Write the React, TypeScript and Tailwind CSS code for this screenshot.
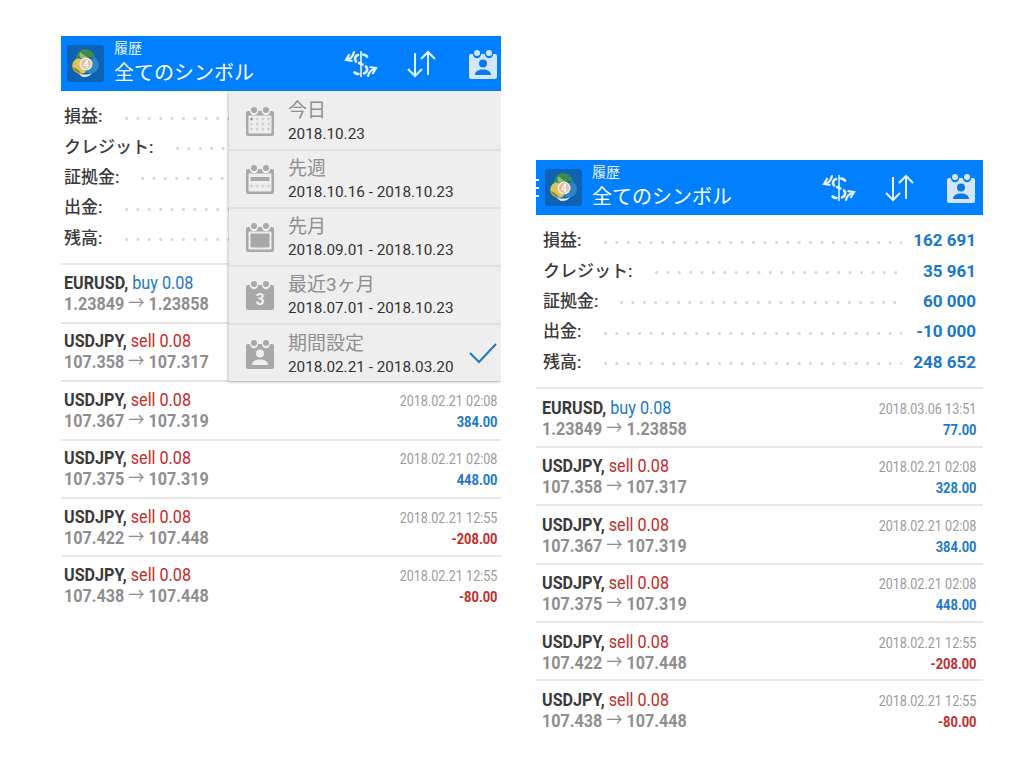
import React from "react";

const FONT = "font-['Roboto','Noto_Sans_CJK_JP',sans-serif]";

function Logo() {
  return (
    <div className="w-[37px] h-[37px] rounded-[3px] bg-[#0d62b3] flex items-center justify-center shrink-0">
      <svg width="33" height="33" viewBox="0 0 33 33">
        <path d="M16 2c5 0 10 4 10 9-3-1-6-1-9 0-3-1-7 0-10 2 0-6 4-11 9-11Z" fill="#3d8a4e" />
        <path d="M11 5c2 2 6 4 9 7-3-1-6-1-8 0-1-2-2-4-1-7Z" fill="#8cc07a" />
        <path d="M7 12c3-1 6 0 7 2 0 4 1 8 3 11-2 2-6 2-9 1-5-2-7-10-1-14Z" fill="#d9c75a" />
        <path d="M4 20c3 1 6 3 8 6-3 0-7-1-8-6Z" fill="#8e8b35" />
        <path d="M26 11c5 3 5 11 0 14-3 2-6 2-9 0 3-3 4-7 3-11 2-2 4-3 6-3Z" fill="#2f86c4" />
        <path d="M9 26c4 2 10 2 14 0-2 3-5 4-8 4-2 0-4-2-6-4Z" fill="#e6eaec" />
        <circle cx="17" cy="17" r="6.500" fill="#f3efe8" />
        <circle cx="17" cy="17" r="5" fill="#f0bb90" />
        <text x="17" y="20.500" textAnchor="middle" fontSize="10" fontWeight="700" fill="#fff" fontFamily="Roboto">4</text>
      </svg>
    </div>
  );
}

function DollarIcon() {
  return (
    <svg width="34" height="30" viewBox="0 0 34 30" fill="none" stroke="#e6f0fb" strokeWidth="2.600" strokeLinecap="round">
      <path d="M17 2v26" strokeWidth="1.600" strokeLinecap="butt" />
      <path d="M23 7.500C21.500 6 20 5.500 19 5.500" />
      <path d="M14 6c-3 1-4 4-2 6.500" />
      <path d="M15 14l3.500 1.500" />
      <path d="M22 17.500c2 2 1.500 6-2 7" />
      <path d="M14.500 25c-1.500 0-3-.5-4-1.500" />
      <path d="M10 3C9 7 7 9.500 4 10.500" strokeWidth="2.200" />
      <path d="M8.500 12 2 11l3.500-6" strokeWidth="2.200" strokeLinecap="butt" />
      <path d="M24 27c1-4 3-6 6-7" strokeWidth="2.200" />
      <path d="M25.500 18 32 19l-3.500 6" strokeWidth="2.200" strokeLinecap="butt" />
    </svg>
  );
}

function ArrowsIcon() {
  return (
    <svg width="31" height="28" viewBox="0 0 31 28" fill="none" stroke="#e6f0fb" strokeWidth="2">
      <path d="M9 3v23M2 19l7 7 7-7" />
      <path d="M22 25V2M15 9l7-7 7 7" />
    </svg>
  );
}

function CalBase({ fill, children, light }: { fill?: boolean; children?: React.ReactNode; light?: boolean }) {
  const c = light ? "#d5e6fa" : "#a8a8a8";
  const bg = light ? "#0080ff" : "#eeeeee";
  return (
    <svg width="28" height="30" viewBox="0 0 28 30">
      <rect x="0" y="5" width="28" height="25" rx="2" fill={c} />
      <circle cx="8" cy="5" r="4.200" fill={bg} />
      <circle cx="20" cy="5" r="4.200" fill={bg} />
      <circle cx="8" cy="4" r="3" fill={c} />
      <circle cx="20" cy="4" r="3" fill={c} />
      {!fill && <rect x="2.500" y="9.500" width="23" height="18" rx="1" fill="#eeeeee" />}
      {children}
    </svg>
  );
}

function PersonCal({ light }: { light?: boolean }) {
  const c = light ? "#0a78e8" : "#eeeeee";
  return (
    <CalBase fill light={light}>
      <circle cx="14" cy="14.500" r="4" fill={c} />
      <path d="M6 26c0-3.500 3-4.500 5.500-5.500h5c2.500 1 5.500 2 5.500 5.500Z" fill={c} />
    </CalBase>
  );
}

function Dots({ rows, y, on }: { rows: number; y: number; on: number }) {
  return (
    <>
      {Array.from({ length: rows * 4 }).map((_, i) => (
        <circle key={i} cx={5.500 + (i % 4) * 5.700} cy={y + Math.floor(i / 4) * 5} r="1.600" fill={i === on ? "#a0a0a0" : "#d2d2d2"} />
      ))}
    </>
  );
}

const menuIcons = [
  <CalBase key="a"><Dots rows={3} y={13} on={0} /></CalBase>,
  <CalBase key="b">
    <rect x="4.500" y="13" width="19" height="4" fill="#a8a8a8" />
    <Dots rows={1} y={22} on={-1} />
  </CalBase>,
  <CalBase key="c"><rect x="4.500" y="11.500" width="19" height="14" rx="1" fill="#a8a8a8" /></CalBase>,
  <CalBase key="d" fill>
    <text x="14" y="25" textAnchor="middle" fontSize="16" fontWeight="700" fill="#eeeeee" fontFamily="Roboto">3</text>
  </CalBase>,
  <PersonCal key="e" />,
];

const menu = [
  ["今日", "2018.10.23"],
  ["先週", "2018.10.16 - 2018.10.23"],
  ["先月", "2018.09.01 - 2018.10.23"],
  ["最近3ヶ月", "2018.07.01 - 2018.10.23"],
  ["期間設定", "2018.02.21 - 2018.03.20"],
];

const stats: [string, string, string][] = [
  ["損益:", "162 691", "w-[61px]"],
  ["クレジット:", "35 961", "w-[112px]"],
  ["証拠金:", "60 000", "w-[77px]"],
  ["出金:", "-10 000", "w-[61px]"],
  ["残高:", "248 652", "w-[61px]"],
];

type Tx = { s: string; side: "buy" | "sell"; a: string; b: string; d: string; v: string };
const txs: Tx[] = [
  { s: "EURUSD", side: "buy", a: "1.23849", b: "1.23858", d: "2018.03.06 13:51", v: "77.00" },
  { s: "USDJPY", side: "sell", a: "107.358", b: "107.317", d: "2018.02.21 02:08", v: "328.00" },
  { s: "USDJPY", side: "sell", a: "107.367", b: "107.319", d: "2018.02.21 02:08", v: "384.00" },
  { s: "USDJPY", side: "sell", a: "107.375", b: "107.319", d: "2018.02.21 02:08", v: "448.00" },
  { s: "USDJPY", side: "sell", a: "107.422", b: "107.448", d: "2018.02.21 12:55", v: "-208.00" },
  { s: "USDJPY", side: "sell", a: "107.438", b: "107.448", d: "2018.02.21 12:55", v: "-80.00" },
];

function Header({ cls }: { cls: string }) {
  return (
    <div className={`h-[55px] bg-[#0080ff] flex items-center shrink-0 ${cls}`}>
      <Logo />
      <div className="ml-[10px] flex-1 text-white">
        <div className="text-[14px] leading-[16px] -mt-[1px] text-[#e6f0fb]">履歴</div>
        <div className="text-[20px] leading-[26px] mt-[4px]">全てのシンボル</div>
      </div>
      <div className="flex items-center">
        <DollarIcon />
        <div className="ml-[28px]"><ArrowsIcon /></div>
        <div className="ml-[32px]"><PersonCal light /></div>
      </div>
    </div>
  );
}

function Stats({ cls }: { cls: string }) {
  return (
    <div className={`pt-[11px] pb-[10px] flex flex-col ${cls}`}>
      {stats.map(([l, v, w]) => (
        <div key={l} className="h-[30.300px] flex items-center">
          <div className={`${w} shrink-0 text-[17px] font-medium text-[#3a3a3a] whitespace-nowrap`}>{l}</div>
          <div className="flex-1 h-[3px] mt-[2px] bg-[radial-gradient(circle_at_1.500px_1.500px,#d4d4d4_1.200px,transparent_1.600px)] bg-[length:11.400px_3px] bg-repeat-x" />
          <div className="w-[74px] text-right text-[17px] font-bold text-[#1b78c8] whitespace-nowrap">{v}</div>
        </div>
      ))}
    </div>
  );
}

function Row({ t, last, cls }: { t: Tx; last?: boolean; cls: string }) {
  const buy = t.side === "buy";
  const neg = t.v.startsWith("-");
  return (
    <div className={`h-[58.400px] flex justify-between ${cls} ${last ? "" : "border-b-2 border-[#e6e6e6]"}`}>
      <div className="w-[200px]">
        <div className="text-[19px] leading-[21px] whitespace-nowrap origin-left scale-x-[0.85]">
          <span className="font-bold text-[#3a3a3a]">{t.s}, </span>
          <span className={buy ? "text-[#1b78c8]" : "text-[#c42a2a]"}>{t.side} 0.08</span>
        </div>
        <div className="text-[19px] leading-[21px] font-bold text-[#8e8e8e] whitespace-nowrap origin-left scale-x-[0.85]">
          {t.a} <span className="font-normal">→</span> {t.b}
        </div>
      </div>
      <div className="text-right pt-[3px]">
        <div className="text-[15px] leading-[19px] text-[#9a9a9a] whitespace-nowrap origin-right scale-x-[0.84]">{t.d}</div>
        <div className={`text-[15px] leading-[22px] font-bold whitespace-nowrap origin-right scale-x-[0.86] ${neg ? "text-[#c42a2a]" : "text-[#1b78c8]"}`}>{t.v}</div>
      </div>
    </div>
  );
}

function Menu() {
  return (
    <div className="absolute right-0 top-[55px] w-[272px] h-[290px] pt-[2px] overflow-hidden bg-[#eeeeee] shadow-[-1px_1px_3px_rgba(0,0,0,0.25)]">
      {menu.map(([a, b], i) => (
        <div key={a} className={`h-[58px] flex items-center pl-[17px] relative ${i < 4 ? "border-b-2 border-[#e0e0e0]" : ""}`}>
          <div className="w-[28px] shrink-0 flex">{menuIcons[i]}</div>
          <div className="ml-[14px]">
            <div className="text-[19px] leading-[26px] text-[#8f8f8f] whitespace-nowrap">{a}</div>
            <div className="text-[15.300px] leading-[20px] text-[#333333] whitespace-nowrap">{b}</div>
          </div>
          {i === 4 && (
            <svg className="absolute right-[4px] top-[17px]" width="28" height="22" viewBox="0 0 28 22" fill="none" stroke="#1b78c8" strokeWidth="2">
              <path d="M1 11l9 9L27 2" />
            </svg>
          )}
        </div>
      ))}
    </div>
  );
}

export default function App() {
  return (
    <div className={`w-[1024px] h-[768px] bg-white flex items-start overflow-hidden ${FONT}`}>
      <div className="relative flex flex-col shrink-0 overflow-hidden ml-[61px] mt-[36px] w-[440px]">
        <Header cls="pl-[6px] pr-[4px]" />
        <Stats cls="pl-[3px] pr-[7px]" />
        <div className="border-t-2 border-[#e6e6e6]">
          {txs.map((t, i) => <Row key={i} t={t} last={i === 5} cls="pl-[3px] pr-[4px] pt-[6.500px]" />)}
        </div>
        <Menu />
      </div>
      <div className="relative flex flex-col shrink-0 overflow-hidden ml-[35px] mt-[160px] w-[447px] h-[572px]">
        <Header cls="pl-[9px] pr-[8px]" />
        <Stats cls="pl-[7px] pr-[7px]" />
        <div className="border-t-2 border-[#e6e6e6]">
          {txs.map((t, i) => <Row key={i} t={t} last={i === 5} cls="pl-[6px] pr-[7px] pt-[7.500px]" />)}
        </div>
        <div className="absolute left-0 top-[19px] flex flex-col gap-[6px]">
          <div className="w-[3px] h-[2px] bg-white" />
          <div className="w-[3px] h-[2px] bg-white" />
          <div className="w-[3px] h-[2px] bg-white" />
        </div>
      </div>
    </div>
  );
}
